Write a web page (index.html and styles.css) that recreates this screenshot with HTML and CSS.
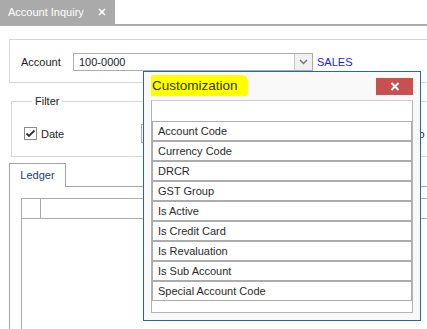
FILE: index.html
```html
<!DOCTYPE html>
<html>
<head>
<meta charset="utf-8">
<link rel="stylesheet" href="styles.css">
</head>
<body>
<div class="tabstrip">
  <div class="doctab"><span>Account Inquiry</span>
    <svg class="tabx" width="8" height="8" viewBox="0 0 8 8"><path d="M1 1L7 7M7 1L1 7" stroke="#fff" stroke-width="1.6"/></svg>
  </div>
</div>
<div class="content">
  <div class="group account">
    <span class="lbl">Account</span>
    <div class="combo">
      <span class="val">100-0000</span>
      <span class="drop"><svg width="9" height="6" viewBox="0 0 9 6"><path d="M1 1L4.5 4.5L8 1" fill="none" stroke="#777" stroke-width="1.5"/></svg></span>
    </div>
    <span class="sales">SALES</span>
  </div>
  <fieldset class="filter">
    <legend>Filter</legend>
    <div class="frow">
      <span class="chk"><svg width="13" height="13" viewBox="0 0 13 13"><rect x="0.5" y="0.5" width="12" height="12" fill="#fff" stroke="#8a8a8a"/><path d="M2.5 6.5L5 9L10.5 3.5" fill="none" stroke="#333" stroke-width="1.8"/></svg></span>
      <span class="dlbl">Date</span>
      <span class="dinput"></span>
      <span class="to">To</span>
    </div>
  </fieldset>
  <div class="ledger">
    <div class="ltabs">
      <div class="ltab">Ledger</div>
      <div class="lfill"></div>
    </div>
    <div class="pane">
      <div class="grid">
        <div class="ghead"><div class="gcell first"></div><div class="gcell"></div></div>
      </div>
    </div>
  </div>
</div>

<div class="dialog">
  <div class="dtitle">
    <span class="hl">Customization</span>
    <span class="dclose"><svg width="10" height="9" viewBox="0 0 10 9"><path d="M1.5 1L8.5 8M8.5 1L1.5 8" stroke="#fff" stroke-width="2"/></svg></span>
  </div>
  <div class="list">
    <div class="search"></div>
    <div class="item">Account Code</div>
    <div class="item">Currency Code</div>
    <div class="item">DRCR</div>
    <div class="item">GST Group</div>
    <div class="item">Is Active</div>
    <div class="item">Is Credit Card</div>
    <div class="item">Is Revaluation</div>
    <div class="item">Is Sub Account</div>
    <div class="item">Special Account Code</div>
  </div>
</div>
</body>
</html>
```

FILE: styles.css
```css
html, body {
  margin: 0;
  padding: 0;
}
body {
  width: 427px;
  height: 329px;
  overflow: hidden;
  position: relative;
  background: #ffffff;
  font-family: "Liberation Sans", Arial, sans-serif;
  font-size: 11px;
  color: #222;
}
.tabstrip {
  height: 24px;
  border-bottom: 2px solid #aaaaaa;
  display: flex;
}
.doctab {
  width: 115px;
  background: #aaaaaa;
  color: #ffffff;
  display: flex;
  align-items: center;
  padding-left: 8px;
  box-sizing: border-box;
  font-size: 11px;
}
.tabx {
  margin-left: 14px;
}
.content {
  padding-left: 9px;
  width: 418px;
  height: 303px;
  overflow: hidden;
}
.group.account {
  margin-top: 13px;
  border: 1px solid #d6d6d6;
  border-right: none;
  height: 18px;
  padding: 13px 0 11px 11px;
  display: flex;
  align-items: center;
}
.lbl {
  width: 52px;
}
.combo {
  width: 240px;
  height: 18px;
  box-sizing: border-box;
  border: 1px solid #acacac;
  display: flex;
  align-items: center;
  background: #fff;
}
.val {
  flex: 1;
  padding-left: 5px;
}
.drop {
  width: 17px;
  height: 16px;
  border-left: 1px solid #c8c8c8;
  background: #f0f0f0;
  display: flex;
  align-items: center;
  justify-content: center;
}
.sales {
  margin-left: 4px;
  color: #1a1aff;
}
.filter {
  margin: 12px 0 0 2px;
  border: 1px solid #d6d6d6;
  border-right: none;
  padding: 16px 0 13px 12px;
  min-width: 0;
}
.filter legend {
  margin-left: 8px;
  padding: 0 3px;
  line-height: 13px;
  height: 13px;
}
.frow {
  display: flex;
  align-items: center;
  height: 19px;
}
.chk {
  width: 13px;
  height: 13px;
  display: flex;
}
.dlbl {
  margin-left: 4px;
  width: 100px;
}
.dinput {
  width: 258px;
  height: 19px;
  box-sizing: border-box;
  border: 1px solid #acacac;
  background: #fff;
}
.to {
  margin-left: 14px;
  white-space: nowrap;
  color: #222;
}
.ledger {
  margin-top: 6px;
}
.ltabs {
  display: flex;
  height: 24px;
}
.ltab {
  width: 57px;
  box-sizing: border-box;
  height: 24px;
  border: 1px solid #a4a4a4;
  border-bottom: none;
  display: flex;
  align-items: center;
  justify-content: center;
  color: #1f3a6e;
  padding-bottom: 2px;
}
.lfill {
  flex: 1;
  border-bottom: 1px solid #a4a4a4;
}
.pane {
  border-left: 1px solid #a4a4a4;
  padding: 11px 0 0 11px;
  height: 136px;
}
.grid {
  border: 1px solid #ababab;
  border-right: none;
  border-bottom: none;
  height: 135px;
}
.ghead {
  display: flex;
  height: 19px;
  border-bottom: 1px solid #ababab;
}
.gcell.first {
  width: 18px;
  border-right: 1px solid #ababab;
}
.dialog {
  position: absolute;
  left: 143px;
  top: 71px;
  width: 278px;
  height: 250px;
  box-sizing: border-box;
  border: 1px solid #2466b4;
  background: #f9f9f9;
  padding: 5px 7px 7px 7px;
}
.dtitle {
  display: flex;
  justify-content: space-between;
  align-items: center;
  height: 18px;
  margin-bottom: 5px;
}
.hl {
  background: #ffff00;
  color: #333300;
  font-size: 13.5px;
  line-height: 21px;
  padding: 0 10px 0 1px;
  margin-top: -1px;
  border-radius: 2px 6px 3px 1px;
}
.dclose {
  width: 37px;
  height: 17px;
  background: #c75050;
  display: flex;
  align-items: center;
  justify-content: center;
}
.list {
  width: 262px;
  height: 213px;
  box-sizing: border-box;
  border: 1px solid #b4b4b4;
  border-top-color: #cccccc;
  background: #ffffff;
}
.search {
  height: 20px;
}
.item {
  height: 18px;
  line-height: 18px;
  border: 1px solid #acacac;
  padding-left: 5px;
  color: #2a2a2a;
}
```
